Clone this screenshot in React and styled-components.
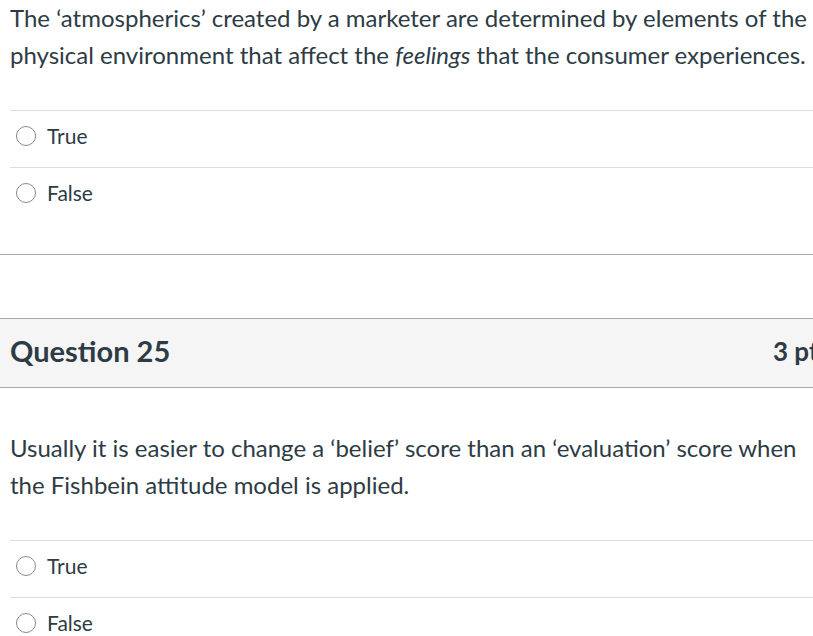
import React from "react";
import styled, { createGlobalStyle } from "styled-components";

const GlobalStyle = createGlobalStyle`
  html, body {
    margin: 0;
    padding: 0;
    background: #fff;
    overflow: hidden;
  }
  body {
    font-family: Lato, "Liberation Sans", sans-serif;
    color: #2d3b45;
  }
`;

const Page = styled.div`
  width: 840px;
`;

const Question = styled.section`
  border-bottom: 1px solid #a9a9a9;
  padding-bottom: 30px;
  margin-bottom: 63px;
`;

const Header = styled.header`
  display: flex;
  align-items: center;
  justify-content: space-between;
  height: 63px;
  padding: 0 10px 5px;
  background: #f5f5f5;
  border-top: 1px solid #a9a9a9;
  border-bottom: 1px solid #a9a9a9;
`;

const Title = styled.h2`
  margin: 0;
  font-size: 29px;
  font-weight: 700;
`;

const Points = styled.span`
  font-size: 26px;
  font-weight: 700;
  color: #2d3b45;
`;

const Text = styled.p`
  margin: -1px 0 0;
  max-width: 805px;
  padding: ${(p) => p.$top || 0}px 10px 0 10px;
  font-size: 24px;
  line-height: 37px;
`;

const Answers = styled.div`
  margin-top: 37px;
  padding-left: 10px;
`;

const Answer = styled.label`
  display: flex;
  align-items: center;
  gap: 11px;
  height: 49px;
  padding: 0 0 7px 6px;
  border-top: 1px solid #dcdcdc;
  font-size: 21px;
`;

const Radio = styled.span`
  width: 18px;
  height: 18px;
  border: 1px solid #8a8a8a;
  border-radius: 50%;
  background: #fff;
  flex: none;
`;

const AnswerList = ({ items }) => (
  <Answers>
    {items.map((a) => (
      <Answer key={a}>
        <Radio />
        {a}
      </Answer>
    ))}
  </Answers>
);

const App = () => (
  <Page>
    <GlobalStyle />
    <Question>
      <Text>
        The ‘atmospherics’ created by a marketer are determined by elements of the
        physical environment that affect the <em>feelings</em> that the consumer experiences.
      </Text>
      <AnswerList items={["True", "False"]} />
    </Question>
    <Header>
      <Title>Question 25</Title>
      <Points>3 pts</Points>
    </Header>
    <Text $top={42}>
      Usually it is easier to change a ‘belief’ score than an ‘evaluation’ score when
      the Fishbein attitude model is applied.
    </Text>
    <AnswerList items={["True", "False"]} />
  </Page>
);

export default App;
